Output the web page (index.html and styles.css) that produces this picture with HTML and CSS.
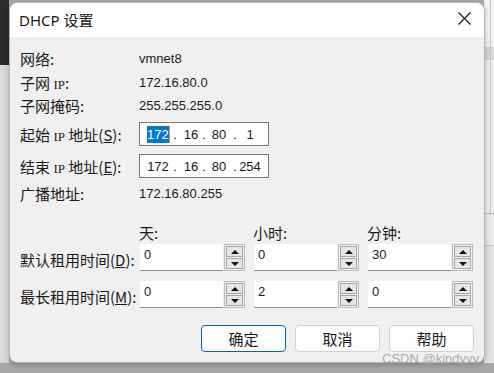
FILE: index.html
```html
<!DOCTYPE html>
<html lang="zh-CN">
<head>
    <meta charset="UTF-8">
    <title>DHCP 设置</title>
    <link rel="stylesheet" href="styles.css">
</head>
<body>
    <div class="dialogo">
        <div class="titulo">
            <span class="titulo-texto">DHCP 设置</span>
            <svg class="fechar" width="13" height="13" viewBox="0 0 13 13">
                <path d="M0.5 0.5 L12.5 12.5 M12.5 0.5 L0.5 12.5" stroke="#1a1a1a" stroke-width="1.2" fill="none"/>
            </svg>
        </div>

        <div class="corpo">
            <div class="linha l1">
                <span class="rotulo">网络:</span>
                <span class="valor">vmnet8</span>
            </div>
            <div class="linha l2">
                <span class="rotulo">子网 <span class="ip">IP</span>:</span>
                <span class="valor">172.16.80.0</span>
            </div>
            <div class="linha l3">
                <span class="rotulo">子网掩码:</span>
                <span class="valor">255.255.255.0</span>
            </div>

            <div class="linha l4">
                <span class="rotulo">起始 <span class="ip">IP</span> 地址(<u>S</u>):</span>
                <div class="caixa-ip">
                    <span class="octeto"><span class="selecionado">172</span></span><span class="ponto">.</span><span class="octeto o2">16</span><span class="ponto p2">.</span><span class="octeto o3">80</span><span class="ponto p3">.</span><span class="octeto">1</span>
                </div>
            </div>
            <div class="linha l5">
                <span class="rotulo">结束 <span class="ip">IP</span> 地址(<u>E</u>):</span>
                <div class="caixa-ip">
                    <span class="octeto">172</span><span class="ponto">.</span><span class="octeto o2">16</span><span class="ponto p2">.</span><span class="octeto o3">80</span><span class="ponto p3">.</span><span class="octeto">254</span>
                </div>
            </div>
            <div class="linha l6">
                <span class="rotulo">广播地址:</span>
                <span class="valor">172.16.80.255</span>
            </div>

            <!-- tempos de concessão -->
            <div class="grade cabecalho">
                <span></span>
                <span>天:</span>
                <span>小时:</span>
                <span>分钟:</span>
            </div>
            <div class="grade tempo t1">
                <span class="rotulo">默认租用时间(<u>D</u>):</span>
                <div class="giro"><div class="campo">0</div><div class="setas"><span class="seta"><i class="cima"></i></span><span class="seta"><i class="baixo"></i></span></div></div>
                <div class="giro"><div class="campo">0</div><div class="setas"><span class="seta"><i class="cima"></i></span><span class="seta"><i class="baixo"></i></span></div></div>
                <div class="giro"><div class="campo">30</div><div class="setas"><span class="seta"><i class="cima"></i></span><span class="seta"><i class="baixo"></i></span></div></div>
            </div>
            <div class="grade tempo t2">
                <span class="rotulo">最长租用时间(<u>M</u>):</span>
                <div class="giro"><div class="campo">0</div><div class="setas"><span class="seta"><i class="cima"></i></span><span class="seta"><i class="baixo"></i></span></div></div>
                <div class="giro"><div class="campo">2</div><div class="setas"><span class="seta"><i class="cima"></i></span><span class="seta"><i class="baixo"></i></span></div></div>
                <div class="giro"><div class="campo">0</div><div class="setas"><span class="seta"><i class="cima"></i></span><span class="seta"><i class="baixo"></i></span></div></div>
            </div>

            <div class="botoes">
                <button class="botao padrao">确定</button>
                <button class="botao">取消</button>
                <button class="botao">帮助</button>
            </div>
        </div>

        <span class="marca">CSDN @kindyyy</span>
    </div>
</body>
</html>
```

FILE: styles.css
```css
body {
    margin: 0;
    width: 494px;
    height: 373px;
    overflow: hidden;
    font-family: "Noto Sans CJK SC", sans-serif;
    color: #1a1a1a;
    background:
        linear-gradient(to bottom, #2b2b2b 0 65px, #dadada 65px 363px, transparent 363px) left top / 9px 100% no-repeat,
        linear-gradient(to right, transparent 0 6px, #c4c4c4 6px 7px, transparent 7px) right top / 10px 215px no-repeat,
        linear-gradient(to bottom, #f4f4f4 0 47px, #d9d9d9 47px 60px, #f0f0f0 60px 213px, #b8b8b8 213px 214px, #ececec 214px 245px, #c8c8c8 245px 246px, #e4e4e4 246px 363px, transparent 363px) right top / 10px 100% no-repeat,
        #a9a9a9;
}
.dialogo {
    position: relative;
    margin: 2px 0 0 9px;
    width: 474px;
    height: 359px;
    border: 1px solid #b4b4b4;
    border-radius: 8px;
    background-color: #f0f0f0;
    box-shadow: 0 2px 6px rgba(0,0,0,0.25);
}
.titulo {
    height: 34px;
    background-color: white;
    border-radius: 8px 8px 0 0;
    display: flex;
    align-items: center;
    justify-content: space-between;
    padding: 0 13px 0 9px;
}
.titulo-texto {
    font-family: "Noto Sans", "Noto Sans CJK SC", sans-serif;
    font-size: 15px;
    margin-top: -2px;
}
.fechar {
    margin-top: -3px;
}
.corpo {
    padding: 10px 10px 0 10px;
}
.linha {
    display: flex;
    align-items: center;
}
.l1 { height: 23px; }
.l2 { height: 24px; }
.l3 { height: 23px; }
.l4 { margin-top: 5px; height: 24px; }
.l5 { margin-top: 8px; height: 24px; }
.l6 { margin-top: 4px; height: 22px; }
.rotulo {
    font-size: 15px;
    white-space: nowrap;
}
.linha .rotulo {
    width: 119px;
}
.ip {
    font-family: "Liberation Serif", serif;
    font-size: 13px;
}
.valor {
    font-family: "Liberation Sans", sans-serif;
    font-size: 13px;
}
.caixa-ip {
    box-sizing: border-box;
    width: 130px;
    height: 24px;
    background-color: white;
    border: 1px solid #7a7a7a;
    padding-left: 7px;
    display: flex;
    align-items: center;
    font-family: "Liberation Sans", sans-serif;
    font-size: 13px;
}
.octeto {
    display: inline-block;
    width: 22px;
    text-align: center;
}
.o2 { width: 20px; }
.o3 { width: 24px; }
.ponto {
    display: inline-block;
    width: 12px;
    text-align: center;
}
.p2 { width: 6px; }
.p3 { width: 8px; }
.selecionado {
    display: inline-block;
    background-color: #0078d7;
    color: white;
    line-height: 17px;
    border-right: 1px solid #e8902a;
}
.grade {
    display: grid;
    grid-template-columns: 111px 105px 105px 105px;
    column-gap: 9px;
}
.cabecalho {
    margin-top: 18px;
    height: 18px;
    align-items: center;
    font-size: 15px;
}
.cabecalho span {
    margin-left: -1px;
}
.tempo {
    height: 27px;
    align-items: center;
}
.t1 { margin-top: 4px; }
.t2 { margin-top: 10px; }
.tempo .rotulo {
    margin-top: 4px;
}
.giro {
    display: flex;
    height: 27px;
    gap: 1px;
}
.campo {
    flex: 1;
    background-color: white;
    border-bottom: 1px solid #8c8c8c;
    font-family: "Liberation Sans", sans-serif;
    font-size: 13px;
    padding: 3px 0 0 4px;
}
.setas {
    box-sizing: border-box;
    width: 21px;
    border: 1px solid #bcbcbc;
    padding: 1px;
    display: flex;
    flex-direction: column;
    gap: 1px;
}
.seta {
    flex: 1;
    border: 1px solid #a6a6a6;
    background-color: #e6e6e6;
    display: flex;
    align-items: center;
    justify-content: center;
}
.cima {
    width: 0;
    height: 0;
    border-left: 4px solid transparent;
    border-right: 4px solid transparent;
    border-bottom: 4px solid #111;
}
.baixo {
    width: 0;
    height: 0;
    border-left: 4px solid transparent;
    border-right: 4px solid transparent;
    border-top: 4px solid #111;
}
.botoes {
    margin-top: 17px;
    display: flex;
    justify-content: flex-end;
    gap: 9px;
}
.botao {
    width: 85px;
    height: 27px;
    border: 1px solid #d0d0d0;
    border-radius: 4px;
    background-color: #fdfdfd;
    font-family: "Noto Sans CJK SC", sans-serif;
    font-size: 15px;
    color: #1a1a1a;
    padding: 0;
}
.padrao {
    border-color: #0067c0;
}
.marca {
    position: absolute;
    right: 5px;
    bottom: -4px;
    font-family: "Liberation Sans", sans-serif;
    font-size: 13px;
    color: rgba(160,160,160,0.9);
}
```
